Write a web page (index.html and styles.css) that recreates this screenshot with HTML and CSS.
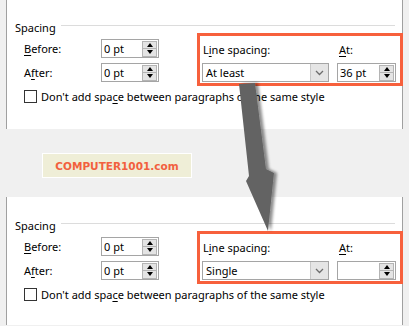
FILE: index.html
```html
<!DOCTYPE html>
<html lang="en">
<head>
    <meta charset="UTF-8">
    <title>Paragraph spacing</title>
    <link rel="stylesheet" href="styles.css">
</head>
<body>
<div class="page">
    <section class="panel">
        <div class="group-title"><span>Spacing</span></div>
        <div class="group-body">
            <div class="fields">
                <div class="field">
                    <label><u>B</u>efore:</label>
                    <div class="spin"><span class="value">0 pt</span><span class="spin-btns"><span class="up"></span><span class="down"></span></span></div>
                </div>
                <div class="field">
                    <label>A<u>f</u>ter:</label>
                    <div class="spin"><span class="value">0 pt</span><span class="spin-btns"><span class="up"></span><span class="down"></span></span></div>
                </div>
            </div>
            <div class="highlight">
                <div class="hl-labels"><span class="ls-label">L<u>i</u>ne spacing:</span><span><u>A</u>t:</span></div>
                <div class="hl-controls">
                    <div class="select"><span class="value">At least</span><span class="select-btn"><svg width="9" height="6" viewBox="0 0 9 6"><path d="M1 1 L4.5 4.5 L8 1" fill="none" stroke="#6d6d6d" stroke-width="1.3"/></svg></span></div>
                    <div class="spin at"><span class="value">36 pt</span><span class="spin-btns"><span class="up"></span><span class="down"></span></span></div>
                </div>
            </div>
        </div>
        <div class="check-row"><span class="checkbox"></span><span>Don't add spa<u>c</u>e between paragraphs of the same style</span></div>
    </section>

    <div class="brand-row"><div class="brand">COMPUTER1001.com</div></div>

    <section class="panel">
        <div class="group-title"><span>Spacing</span></div>
        <div class="group-body">
            <div class="fields">
                <div class="field">
                    <label><u>B</u>efore:</label>
                    <div class="spin"><span class="value">0 pt</span><span class="spin-btns"><span class="up"></span><span class="down"></span></span></div>
                </div>
                <div class="field">
                    <label>A<u>f</u>ter:</label>
                    <div class="spin"><span class="value">0 pt</span><span class="spin-btns"><span class="up"></span><span class="down"></span></span></div>
                </div>
            </div>
            <div class="highlight">
                <div class="hl-labels"><span class="ls-label">L<u>i</u>ne spacing:</span><span><u>A</u>t:</span></div>
                <div class="hl-controls">
                    <div class="select"><span class="value">Single</span><span class="select-btn"><svg width="9" height="6" viewBox="0 0 9 6"><path d="M1 1 L4.5 4.5 L8 1" fill="none" stroke="#6d6d6d" stroke-width="1.3"/></svg></span></div>
                    <div class="spin at"><span class="value"></span><span class="spin-btns"><span class="up"></span><span class="down"></span></span></div>
                </div>
            </div>
        </div>
        <div class="check-row"><span class="checkbox"></span><span>Don't add spa<u>c</u>e between paragraphs of the same style</span></div>
    </section>

    <svg class="arrow" width="409" height="326" viewBox="0 0 409 326">
        <defs>
            <filter id="soft" x="-50%" y="-10%" width="200%" height="120%">
                <feGaussianBlur in="SourceAlpha" stdDeviation="1.6" result="b"/>
                <feOffset dx="3" dy="0" result="o"/>
                <feComponentTransfer in="o" result="s"><feFuncA type="linear" slope="0.45"/></feComponentTransfer>
                <feMerge><feMergeNode in="s"/><feMergeNode in="SourceGraphic"/></feMerge>
            </filter>
        </defs>
        <polygon points="239,85 255,84 266,170 274,174 268,232 246,182 249,177" fill="#646464" filter="url(#soft)"/>
    </svg>
</div>
</body>
</html>
```

FILE: styles.css
```css
body {
    margin: 0;
    background: #f0f0f0;
    font-family: "Noto Sans", sans-serif;
    font-size: 11px;
    color: #000;
    overflow: hidden;
}
u {
    text-underline-offset: 2px;
}
.page {
    position: relative;
    width: 409px;
    height: 326px;
}
.panel {
    box-sizing: border-box;
    margin-left: 6px;
    width: 397px;
    height: 130px;
    background: #fff;
    border-left: 1px solid #a0a0a0;
    border-right: 1px solid #a0a0a0;
    padding: 21px 0 0 8px;
}
.panel:first-child {
    margin-top: -1px;
}
.group-title {
    display: flex;
    align-items: flex-start;
    height: 13px;
    line-height: 13px;
}
.group-title span {
    margin-top: 1px;
}
.group-title::after {
    content: "";
    flex: 1;
    margin: 5px 7px 0 5px;
    border-top: 1px solid #dcdcdc;
}
.group-body {
    display: flex;
}
.fields {
    display: flex;
    flex-direction: column;
    gap: 5px;
    margin-left: 9px;
    padding-top: 6px;
}
.field {
    display: flex;
    align-items: center;
    height: 19px;
}
.field label {
    width: 77px;
}
.spin {
    box-sizing: border-box;
    display: flex;
    align-items: center;
    width: 58px;
    height: 19px;
    border: 1px solid #a5a5a5;
    padding-left: 2px;
}
.spin.at {
    width: 59px;
}
.value {
    flex: 1;
}
.spin-btns {
    display: flex;
    flex-direction: column;
    width: 15px;
    height: 16px;
    margin-right: 1px;
}
.spin-btns span {
    box-sizing: border-box;
    position: relative;
    height: 8px;
    background: #e4e4e4;
    border: 1px solid #b4b4b4;
}
.spin-btns .down {
    border-top: none;
}
.spin-btns span::after {
    content: "";
    position: absolute;
    left: 4px;
    border-left: 3px solid transparent;
    border-right: 3px solid transparent;
}
.spin-btns .up::after {
    top: 1px;
    border-bottom: 4px solid #000;
}
.spin-btns .down::after {
    top: 1px;
    border-top: 4px solid #000;
}
.highlight {
    box-sizing: border-box;
    width: 206px;
    height: 53px;
    margin-left: 38px;
    border: 3px solid #f7603c;
    padding: 0 4px 1px 2px;
}
.hl-labels {
    display: flex;
    align-items: center;
    height: 27px;
}
.ls-label {
    width: 136px;
    padding-left: 1px;
}
.hl-controls {
    display: flex;
    gap: 8px;
    height: 19px;
}
.select {
    box-sizing: border-box;
    display: flex;
    align-items: center;
    width: 127px;
    height: 19px;
    border: 1px solid #a5a5a5;
    padding-left: 3px;
}
.select-btn {
    display: flex;
    align-items: center;
    justify-content: center;
    width: 17px;
    height: 100%;
    background: #e5e5e5;
    border-left: 1px solid #c8c8c8;
}
.check-row {
    display: flex;
    align-items: center;
    gap: 4px;
    margin: 4px 0 0 9px;
    height: 13px;
}
.checkbox {
    box-sizing: border-box;
    width: 13px;
    height: 13px;
    border: 1px solid #333;
    background: #fff;
}
.brand-row {
    height: 68px;
    padding: 24px 0 0 42px;
    box-sizing: border-box;
}
.brand {
    box-sizing: border-box;
    display: flex;
    align-items: center;
    justify-content: center;
    width: 150px;
    height: 25px;
    background: #efeed7;
    border: 1px solid #fff;
    font-family: "DejaVu Sans", sans-serif;
    font-weight: bold;
    font-size: 10.5px;
    color: #f2603e;
}
.arrow {
    position: absolute;
    left: 0;
    top: 0;
    pointer-events: none;
}
```
